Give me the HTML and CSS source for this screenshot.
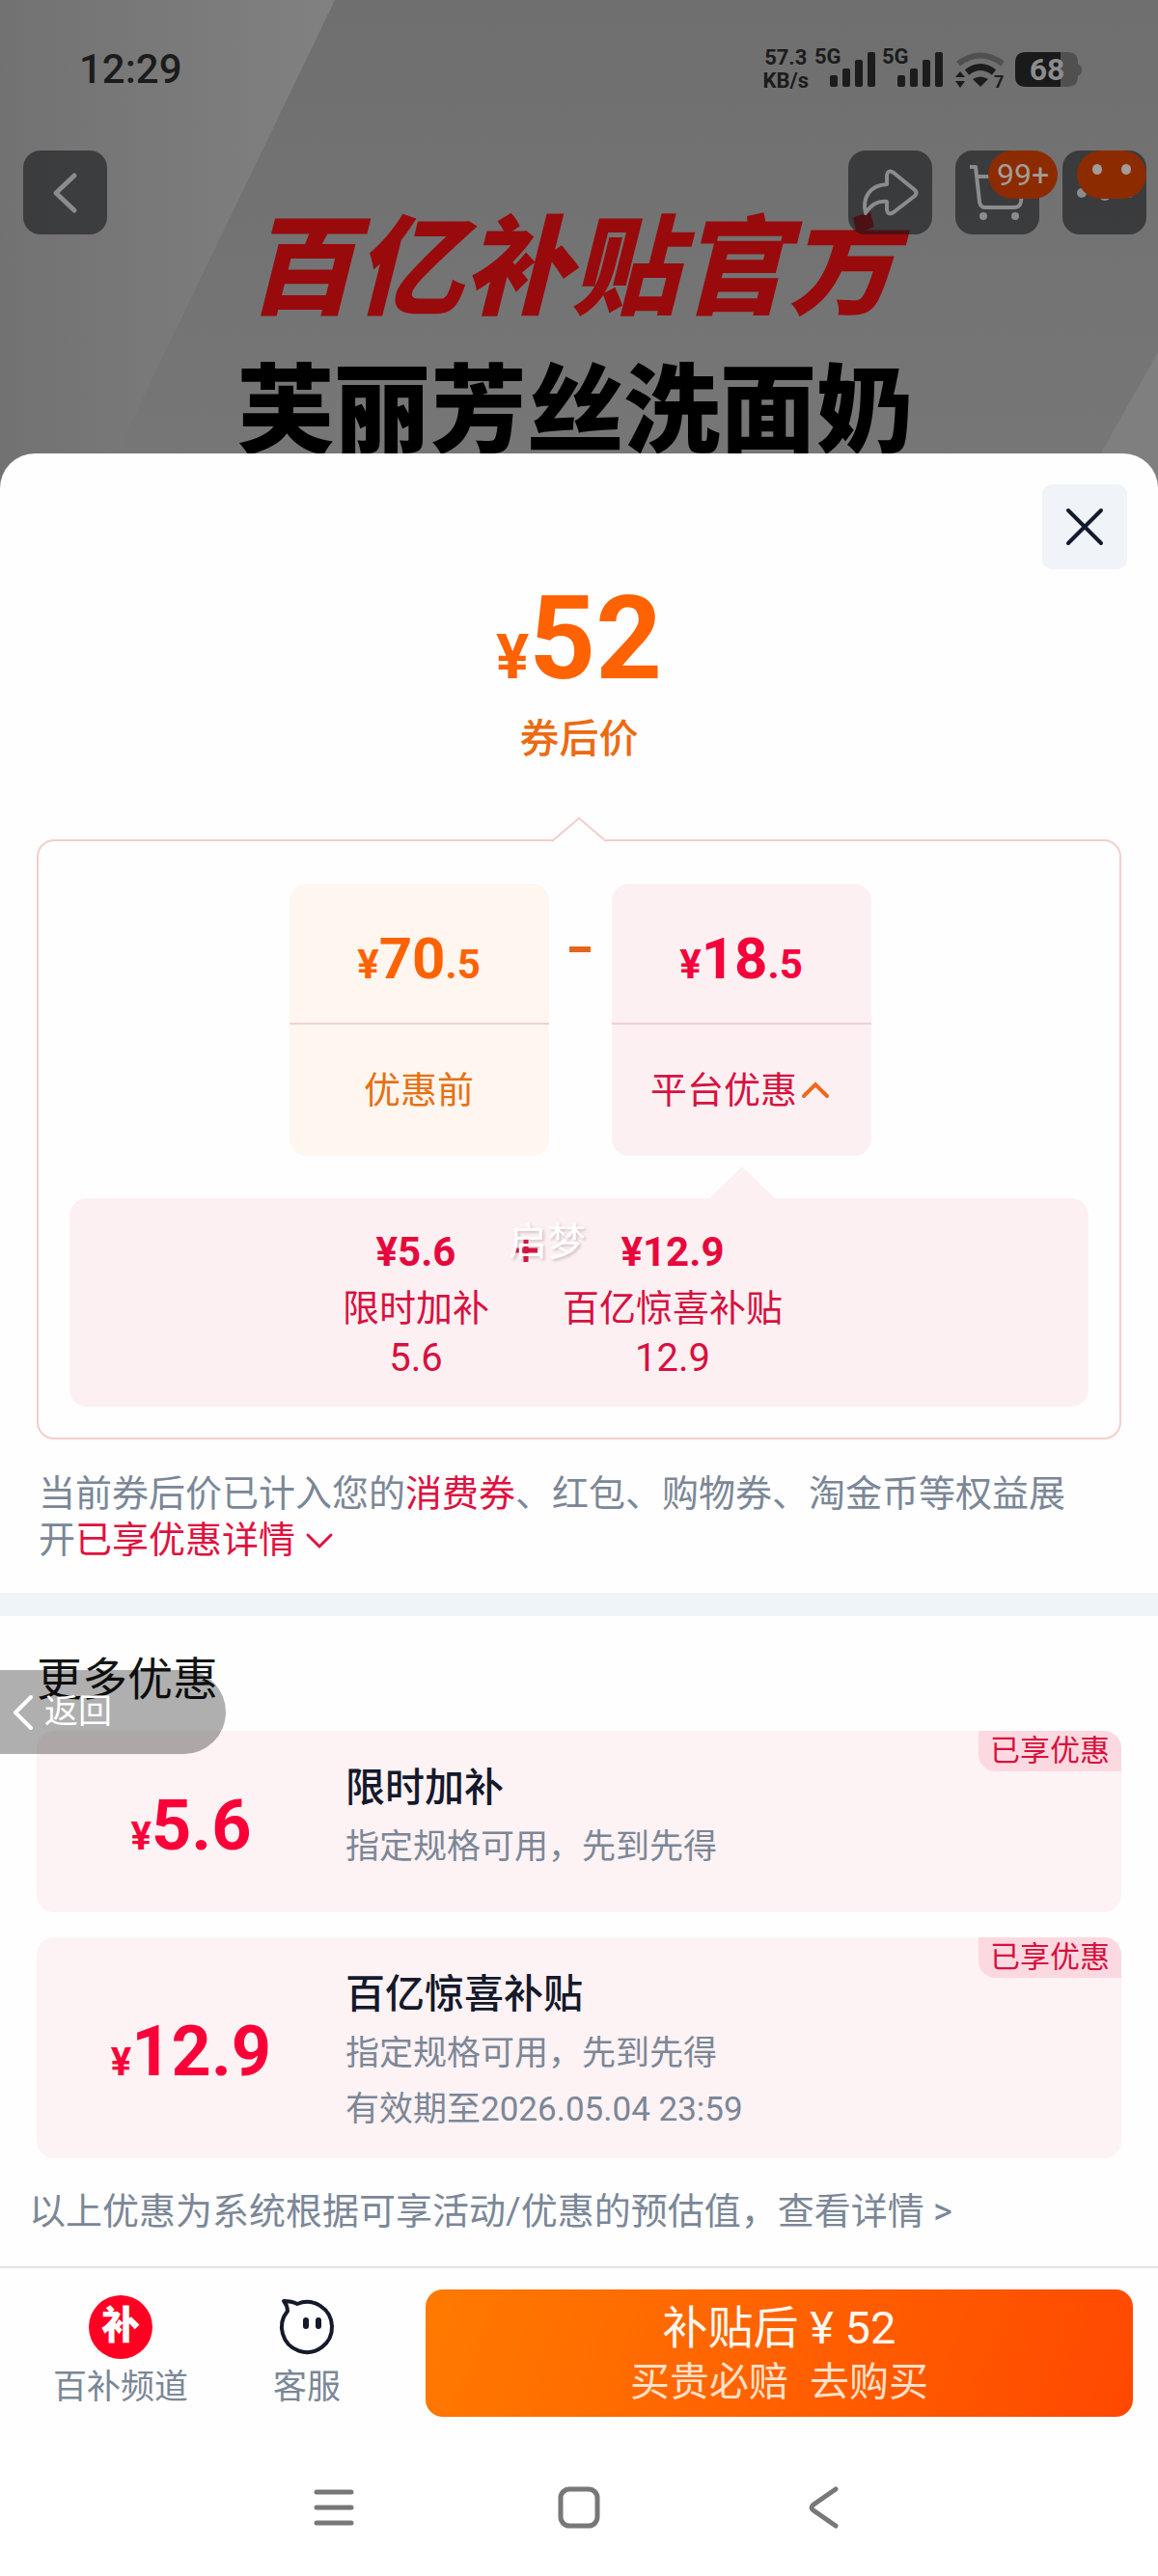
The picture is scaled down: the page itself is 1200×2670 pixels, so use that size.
FILE: index.html
```html
<!DOCTYPE html>
<html lang="zh-CN">
<head>
	<meta charset="UTF-8">
	<meta name="viewport" content="width=device-width, initial-scale=1">
	<title>优惠明细</title>
	<link rel="stylesheet" href="styles.css">
</head>
<body>
	<header class="hero">
		<svg class="hero-bg" viewBox="0 0 1200 510" preserveAspectRatio="none" aria-hidden="true">
			<defs>
				<linearGradient id="light" x1="0" y1="0" x2="1" y2="0">
					<stop offset="0" stop-color="#727272"/>
					<stop offset="1" stop-color="#818181"/>
				</linearGradient>
			</defs>
			<path d="M0 0H347L101 510H0Z" fill="url(#light)"/>
			<path d="M1200 365V510H1118Z" fill="#7f7f7f"/>
		</svg>
		<div class="banner">
			<p class="banner-official">百亿补贴官方</p>
			<p class="banner-name">芙丽芳丝洗面奶</p>
		</div>
		<div class="overlay">
			<div class="status">
				<span class="time">12:29</span>
				<div class="status-right">
					<span class="speed">57.3<br>KB/s</span>
					<svg width="64" height="44" viewBox="0 0 64 44" class="signal">
						<text x="0" y="18">5G</text>
						<rect x="16" y="30" width="8" height="12" rx="2"/>
						<rect x="29" y="23" width="8" height="19" rx="2"/>
						<rect x="42" y="14" width="8" height="28" rx="2"/>
						<rect x="55" y="6" width="8" height="36" rx="2"/>
					</svg>
					<svg width="64" height="44" viewBox="0 0 64 44" class="signal">
						<text x="0" y="18">5G</text>
						<rect x="16" y="30" width="8" height="12" rx="2"/>
						<rect x="29" y="23" width="8" height="19" rx="2"/>
						<rect x="42" y="14" width="8" height="28" rx="2"/>
						<rect x="55" y="6" width="8" height="36" rx="2"/>
					</svg>
					<svg width="52" height="44" viewBox="0 0 52 44" class="wifi">
						<path d="M3 18Q26 1 49 18" fill="none" stroke="#505050" stroke-width="6"/>
						<path d="M12 27Q26 16 40 27" fill="none" stroke="#1c1c1c" stroke-width="7"/>
						<path d="M18 34Q26 29 34 34L26 42Z"/>
						<path d="M0 32L5 26L10 32ZM0 36H10L5 43Z"/>
						<text x="40" y="43">7</text>
					</svg>
					<svg width="70" height="44" viewBox="0 0 70 44" class="battery">
						<path d="M47 6H54Q65 6 65 17V18Q69 20 69 24.500Q69 29 65 31Q65 42 54 42H47Z" fill="#505050"/>
						<path d="M11 6H47V42H11Q0 42 0 31V17Q0 6 11 6Z" fill="#1a1a1a"/>
						<text x="33" y="35">68</text>
					</svg>
				</div>
			</div>
			<nav class="topnav">
				<button type="button" class="nav-btn" aria-label="返回上一页">
					<svg width="87" height="87" viewBox="0 0 87 87"><path d="M53 26L34 44L53 62" fill="none" stroke="#8a8c8d" stroke-width="5" stroke-linecap="round" stroke-linejoin="round"/></svg>
				</button>
				<button type="button" class="nav-btn push" aria-label="分享">
					<svg width="87" height="87" viewBox="0 0 87 87"><path d="M18 65C14 48 23 36 40 35V26Q41 19 47 23L69 41Q72 44 69 47L47 64Q41 68 40 61V53C30 52 24 56 18 65Z" fill="none" stroke="#8a8c8d" stroke-width="4" stroke-linejoin="round"/></svg>
				</button>
				<button type="button" class="nav-btn" aria-label="购物车">
					<svg width="87" height="87" viewBox="0 0 87 87">
						<path d="M15 17H21L25 53Q26 59 31 59H61Q67 59 68 53L71 27H22" fill="none" stroke="#8a8c8d" stroke-width="4" stroke-linejoin="round"/>
						<circle cx="29" cy="68" r="4" fill="#8a8c8d"/>
						<circle cx="62" cy="68" r="4" fill="#8a8c8d"/>
					</svg>
					<span class="badge badge-count">99+</span>
				</button>
				<button type="button" class="nav-btn" aria-label="更多">
					<svg width="87" height="87" viewBox="0 0 87 87">
						<circle cx="20" cy="44" r="5" fill="#8a8c8d"/>
						<circle cx="44" cy="46" r="6" fill="#8a8c8d"/>
						<circle cx="69" cy="44" r="5" fill="#8a8c8d"/>
					</svg>
					<span class="badge badge-face"><i class="eye"></i><i class="eye"></i></span>
				</button>
			</nav>
		</div>
	</header>

	<main class="sheet">
		<button type="button" class="close" aria-label="关闭">
			<svg width="44" height="44" viewBox="0 0 44 44"><path d="M5 5L39 39M39 5L5 39" stroke="#141a2e" stroke-width="4" stroke-linecap="round"/></svg>
		</button>

		<div class="final">
			<p class="final-price"><span>¥</span>52</p>
			<p class="final-label">券后价</p>
		</div>

		<section class="formula">
			<svg class="notch" width="56" height="26" viewBox="0 0 56 26" aria-hidden="true">
				<path d="M0 26L28 2L56 26" fill="#fefefe" stroke="#f2cfcb" stroke-width="2"/>
			</svg>
			<div class="cards">
				<div class="card card-before">
					<p class="card-price"><span>¥</span>70<span>.5</span></p>
					<p class="card-label">优惠前</p>
				</div>
				<span class="minus"></span>
				<div class="card card-platform">
					<p class="card-price"><span>¥</span>18<span>.5</span></p>
					<button type="button" class="card-label">平台优惠<svg width="36" height="24" viewBox="0 0 36 24"><path d="M7 18L19 6L31 18" fill="none" stroke="#ec6a1c" stroke-width="4" stroke-linecap="round"/></svg></button>
				</div>
			</div>
			<div class="detail">
				<div class="detail-item">
					<strong>¥5.6</strong>
					<span class="name">限时加补</span>
					<span class="num">5.6</span>
				</div>
				<div class="plus">
					<svg width="24" height="24" viewBox="0 0 24 24"><path d="M0 12H24M12 0V24" stroke="#d8103f" stroke-width="5"/></svg>
					<span class="watermark">启梦</span>
				</div>
				<div class="detail-item">
					<strong>¥12.9</strong>
					<span class="name">百亿惊喜补贴</span>
					<span class="num">12.9</span>
				</div>
			</div>
		</section>

		<p class="notice">当前券后价已计入您的<em>消费券</em>、红包、购物券、淘金币等权益展开<a href="#detail">已享优惠详情<svg width="40" height="24" viewBox="0 0 40 24"><path d="M13 6L25 18L37 6" fill="none" stroke="#e0103f" stroke-width="3" stroke-linecap="round"/></svg></a></p>

		<section class="more" id="detail">
			<h2>更多优惠</h2>
			<div class="coupon">
				<p class="coupon-price"><span>¥</span>5.6</p>
				<div class="coupon-info">
					<h3>限时加补</h3>
					<p>指定规格可用，先到先得</p>
				</div>
				<span class="tag">已享优惠</span>
			</div>
			<div class="coupon">
				<p class="coupon-price"><span>¥</span>12.9</p>
				<div class="coupon-info">
					<h3>百亿惊喜补贴</h3>
					<p>指定规格可用，先到先得</p>
					<p>有效期至2026.05.04 23:59</p>
				</div>
				<span class="tag">已享优惠</span>
			</div>
			<button type="button" class="return">
				<svg width="24" height="40" viewBox="0 0 24 40"><path d="M20 4L4 20L20 36" fill="none" stroke="#fff" stroke-width="4" stroke-linecap="round" stroke-linejoin="round"/></svg>返回
			</button>
		</section>

		<p class="estimate">以上优惠为系统根据可享活动/优惠的预估值，<a href="#rules">查看详情 &gt;</a></p>
	</main>

	<footer class="tabbar">
		<a class="tab" href="#channel">
			<span class="logo">补</span>
			百补频道
		</a>
		<a class="tab" href="#service">
			<svg width="66" height="66" viewBox="0 0 66 66">
				<path d="M23 9A26 26 0 1 1 13 16.400Q13 11 9 6Q17 6 23 9Z" fill="#fff" stroke="#141a2b" stroke-width="4" stroke-linejoin="round"/>
				<rect x="29" y="23" width="6" height="12" rx="3" fill="#141a2b"/>
				<rect x="42" y="23" width="6" height="12" rx="3" fill="#141a2b"/>
			</svg>
			客服
		</a>
		<button type="button" class="buy">
			<span class="buy-price">补贴后 ¥ 52</span>
			<span class="buy-sub"><span>买贵必赔</span><span>去购买</span></span>
		</button>
	</footer>

	<nav class="sysnav">
		<button type="button" aria-label="最近任务">
			<svg width="46" height="46" viewBox="0 0 46 46"><path d="M5 7H41M5 23H41M5 39H41" stroke="#787878" stroke-width="5" stroke-linecap="round"/></svg>
		</button>
		<button type="button" aria-label="主屏幕">
			<svg width="46" height="46" viewBox="0 0 46 46"><rect x="4" y="4" width="38" height="38" rx="9" fill="none" stroke="#787878" stroke-width="5"/></svg>
		</button>
		<button type="button" aria-label="返回">
			<svg width="46" height="46" viewBox="0 0 46 46"><path d="M35 4L12 20Q8 23 12 26L35 42" fill="none" stroke="#787878" stroke-width="5" stroke-linecap="round"/></svg>
		</button>
	</nav>
</body>
</html>
```
FILE: styles.css
```css
*{margin:0;padding:0;box-sizing:border-box;}
body{
	font-family:Roboto,"Noto Sans CJK SC",sans-serif;
	font-size:38px;
	line-height:48px;
	color:#7b8797;
	background:#fefefe;
}
button{
	font:inherit;
	color:inherit;
	border:0;
	background:none;
	cursor:pointer;
}
a{color:inherit;text-decoration:none;}
em,i{font-style:normal;}
svg{display:block;overflow:visible;}

/* 顶部商品图 */
.hero{
	position:relative;
	overflow:hidden;
	background:linear-gradient(#6f6f6f,#777);
}
.hero-bg{
	position:absolute;
	width:100%;
	height:100%;
}
.banner{
	position:relative;
	display:flex;
	flex-direction:column;
	align-items:center;
	gap:30px;
	padding:208px 0 32px;
	font-family:"Noto Sans CJK SC",sans-serif;
	font-weight:900;
	line-height:120px;
	white-space:nowrap;
}
.banner-official{
	padding-right:16px;
	font-size:112px;
	font-style:italic;
	color:#990a0c;
}
.banner-name{
	padding-right:8px;
	font-size:100px;
	color:#000;
}
.overlay{
	position:absolute;
	top:0;
	left:0;
	right:0;
}
.status{
	display:flex;
	justify-content:space-between;
	height:156px;
	padding:48px 78px 0 82px;
	color:#1c1c1c;
}
.time{
	font-size:42px;
	font-weight:500;
}
.status-right{
	display:flex;
	gap:6px;
	font-weight:700;
}
.speed{
	font-size:22px;
	line-height:24px;
	text-align:center;
}
.signal,.wifi{fill:#1c1c1c;font-size:22px;}
.wifi{margin-left:6px;font-size:18px;}
.battery{
	margin-left:4px;
	font-size:32px;
	text-anchor:middle;
	fill:#8c8c8c;
}
.topnav{
	display:flex;
	gap:24px;
	padding:0 12px 0 24px;
}
.nav-btn{
	position:relative;
	border-radius:18px;
	background:rgba(22,24,26,.6);
}
.push{margin-left:auto;}
.badge{
	position:absolute;
	top:0;
	width:72px;
	height:50px;
	border-radius:25px;
	background:#8c2b00;
	color:#a39c98;
}
.badge-count{
	left:34px;
	font-size:32px;
	line-height:50px;
}
.badge-face{
	right:0;
	display:flex;
	justify-content:center;
	gap:20px;
	padding-top:14px;
}
.eye{
	width:10px;
	height:11px;
	border-radius:50%;
	background:#a39c98;
}

/* 优惠弹层 */
.sheet{
	position:relative;
	margin-top:-40px;
	padding-top:132px;
	border-radius:36px 36px 0 0;
	background:#fefefe;
}
.close{
	position:absolute;
	top:32px;
	right:32px;
	padding:22px;
	border-radius:10px;
	background:#f0f4f8;
}
.final{
	text-align:center;
	color:#ff6200;
}
.final-price{
	font-size:120px;
	font-weight:700;
	line-height:120px;
}
.final-price span,.card-price span,.coupon-price span{line-height:1;}
.final-price span{font-size:64px;}
.final-label{
	margin-top:20px;
	font-size:41px;
	font-weight:500;
	color:#ec6a12;
}
.formula{
	position:relative;
	margin:80px 38px 32px;
	padding:44px 32px 32px;
	border:2px solid #f2cfcb;
	border-radius:18px;
}
.notch{
	position:absolute;
	top:-26px;
	left:50%;
	margin-left:-28px;
}
.cards{
	display:flex;
	justify-content:center;
	padding-left:2px;
}
.card{
	width:269px;
	border-radius:18px;
	text-align:center;
}
.card-before{background:#fff6f0;color:#ff6200;}
.card-platform{background:#fdf0f3;color:#f4003a;}
.card-price{
	padding:48px 0 36px;
	border-bottom:2px solid #f4ced3;
	font-size:60px;
	font-weight:700;
	line-height:60px;
}
.card-price span{font-size:42px;}
.card-label{
	display:flex;
	align-items:center;
	justify-content:center;
	width:100%;
	padding:44px 0;
	color:#e87012;
}
.card-platform .card-label{color:#d8123f;}
.minus{
	width:22px;
	height:6px;
	margin:65px 22px 0 21px;
	background:#e5651a;
}
.detail{
	position:relative;
	display:flex;
	justify-content:center;
	margin-top:44px;
	padding:26px 34px 26px 0;
	border-radius:18px;
	background:#fdf0f3;
	color:#d8103f;
}
.detail:before{
	content:"";
	position:absolute;
	top:-33px;
	left:calc(50% + 135px);
	width:68px;
	height:33px;
	background:#fdf0f3;
	clip-path:polygon(50% 0,100% 100%,0 100%);
}
.detail-item{
	display:flex;
	flex-direction:column;
	align-items:center;
}
.detail-item strong{
	font-size:42px;
	line-height:60px;
	color:#e6083c;
}
.detail-item .name{line-height:56px;}
.detail-item .num{font-size:40px;}
.plus{
	position:relative;
	width:76px;
	padding:16px 26px;
}
.watermark{
	position:absolute;
	top:-4px;
	left:20px;
	font-size:40px;
	white-space:nowrap;
	color:#fff;
	text-shadow:2px 2px 3px rgba(120,90,100,.3);
}
.notice{padding:0 64px 31px 40px;}
.notice em,.notice a{color:#e0103f;}
.notice svg{display:inline-block;}

/* 更多优惠 */
.more{
	position:relative;
	padding:34px 38px 0;
	border-top:24px solid #eff4f8;
}
.more h2{
	margin-bottom:21px;
	font-size:47px;
	font-weight:400;
	line-height:64px;
	color:#151515;
}
.coupon{
	position:relative;
	display:flex;
	align-items:center;
	padding:35px 0 26px;
	border-radius:18px;
	background:#fdf2f4;
}
.coupon + .coupon{margin-top:26px;}
.coupon-price{
	width:320px;
	font-size:72px;
	font-weight:700;
	line-height:76px;
	text-align:center;
	color:#fa0038;
}
.coupon-price span{font-size:40px;}
.coupon-info{
	min-height:127px;
	font-size:35px;
}
.coupon-info h3{
	margin-bottom:14px;
	font-size:41px;
	font-weight:500;
	color:#14192b;
}
.coupon-info p + p{margin-top:10px;}
.tag{
	position:absolute;
	top:0;
	right:0;
	padding:0 12px;
	border-radius:0 18px 0 18px;
	background:#fcd9e0;
	font-size:31px;
	line-height:42px;
	color:#d8103f;
}
.return{
	position:absolute;
	top:56px;
	left:0;
	display:flex;
	align-items:center;
	gap:10px;
	width:234px;
	height:87px;
	padding-left:12px;
	border-radius:0 44px 44px 0;
	background:rgba(0,0,0,.31);
	font-size:35px;
	color:#fff;
}
.estimate{padding:31px 30px 33px;}

/* 底部操作栏 */
.tabbar{
	display:flex;
	gap:88px;
	padding:22px 26px 23px 55px;
	border-top:2px solid #e2e2e2;
}
.tab{
	display:flex;
	flex-direction:column;
	align-items:center;
	gap:10px;
	padding-top:6px;
	font-size:35px;
	line-height:40px;
}
.logo{
	width:66px;
	height:66px;
	border-radius:50%;
	background:#ff0022;
	font-size:40px;
	font-weight:900;
	line-height:64px;
	text-align:center;
	color:#fff;
}
.buy{
	flex:1;
	display:flex;
	flex-direction:column;
	align-items:center;
	padding:10px 0;
	border-radius:18px;
	background:linear-gradient(110deg,#ff7a00,#ff4800);
	color:#fff8f0;
}
.buy-price{
	font-size:47px;
	line-height:60px;
}
.buy-sub{
	display:flex;
	gap:22px;
	font-size:41px;
	line-height:52px;
	color:#ffe0c8;
}
.sysnav{
	display:flex;
	justify-content:center;
	gap:208px;
	padding:48px 0;
	background:#fff;
}
```
